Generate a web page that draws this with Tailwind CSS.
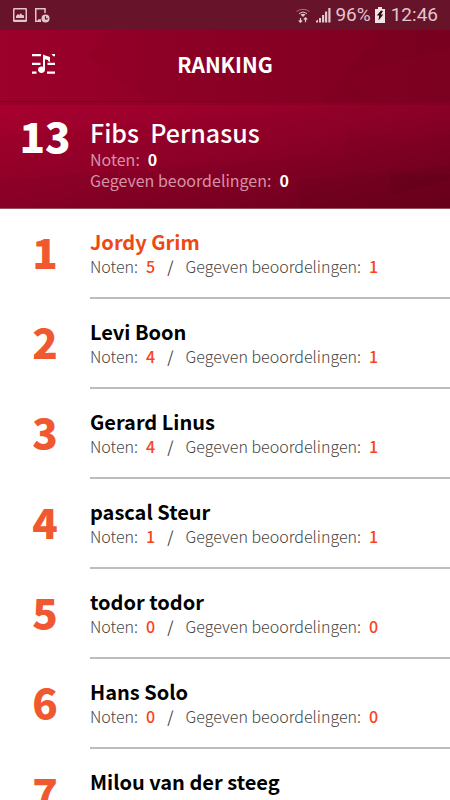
<!DOCTYPE html>
<html lang="nl">
<head>
  <meta charset="UTF-8" />
  <meta name="viewport" content="width=device-width, initial-scale=1.0" />
  <title>Ranking</title>
  <script src="https://cdn.jsdelivr.net/npm/@tailwindcss/browser@4"></script>
</head>
<body class="bg-white h-screen flex flex-col overflow-hidden font-['Noto_Sans_CJK_JP','Open_Sans',sans-serif]">

  <!-- Status bar -->
  <div class="h-[30px] shrink-0 bg-[#671329] flex items-center justify-between px-3 text-[#e2c6ce] font-[Roboto,sans-serif]">
    <div class="flex items-center gap-[6px]">
      <svg class="w-4 h-4" viewBox="0 0 16 16" fill="none" stroke="currentColor" stroke-width="1.5">
        <rect x="1.75" y="1.75" width="12.5" height="12.5" rx="0.5" />
        <path d="M1.750 13.500h12.500" />
        <path d="M4 11V9l2-2 1.500 1L9 6l1 2h1.500L12 9v2z" fill="currentColor" stroke="none" />
      </svg>
      <svg class="w-4 h-4" viewBox="0 0 16 16" fill="none" stroke="currentColor" stroke-width="1.5">
        <path d="M11 6V1.750H1.750v12.500H7M4 13h3" />
        <circle cx="11.500" cy="11.500" r="4" fill="currentColor" stroke="none" />
        <path d="M11.500 9.200v2.600h2.300" stroke="#671329" stroke-width="1.200" />
      </svg>
    </div>
    <div class="flex items-center">
      <svg class="w-4 h-4 mr-1" viewBox="0 0 16 16" fill="none" stroke="currentColor">
        <path d="M1.500 4.500a9 7 0 0 1 13 0" opacity="0.500" />
        <path d="M4 6.500a6 5 0 0 1 8 0" />
        <path d="M5.500 7.500a4 3 0 0 1 5 0L8 10z" fill="currentColor" stroke="none" />
        <path d="M5.500 11v4M3.800 13.500l1.700 1.700 1.700-1.700M10.500 15.200V11M8.800 12.500l1.700-1.700 1.700 1.700" stroke-width="1.200" />
      </svg>
      <svg class="w-4 h-4 mr-1" viewBox="0 0 16 16" fill="currentColor">
        <path d="M1 15.500V14l2-1.500v3zM4 11h2v4.500H4zM7 8h2.200v7.500H7zM10 4.500h2.200v11H10zM13.300 1h2.200v14.500h-2.200z" />
      </svg>
      <span class="text-[19px] leading-[30px]">96%</span>
      <svg class="w-[10px] h-4 ml-1 mr-[6px]" viewBox="0 0 10 16">
        <path d="M3 0h4v2h3v14H0V2h3z" fill="#f3e3e7" />
        <path d="M6 3.500L1.800 8.500h2.400L3.500 13.500 8.300 7.500H5.800L8 4z" fill="#2a0a12" />
      </svg>
      <span class="text-[19px] leading-[30px]">12:46</span>
    </div>
  </div>

  <!-- App bar -->
  <header class="relative isolate h-[72px] shrink-0 bg-linear-to-r from-[#9c002b] to-[#7e0021] border-b border-[#780022] grid grid-cols-[90px_1fr_90px] items-center pb-[3px]">
    <svg class="absolute inset-0 -z-10 w-full h-full" viewBox="0 0 450 72" preserveAspectRatio="none">
      <path d="M108 0L88 27 150 72H450V0z" fill="#5a0018" opacity="0.050" />
      <path d="M382 0L344 46 320 72H450V0z" fill="#5a0018" opacity="0.080" />
      <path d="M344 46L450 20V72H370z" fill="#a00030" opacity="0.080" />
    </svg>
    <button type="button" aria-label="Songs" class="ml-8 text-white">
      <svg class="block w-6 h-6" viewBox="0 0 24 24" fill="currentColor">
        <path d="M0 2h9v2.300H0zM0 10.800h8.500v2.300H0zM0 19.500h4.500v2.300H0zM19.500 2H23v2.300h-1.800zM15.500 10.800H23v2.300h-7.500zM15 19.500h8v2.300h-8z" />
        <path d="M11 2.500l3 1.200 4 1.300v4.700h-1.200L15.800 8 13 7.200v10.600a3.500 3.300 0 1 1-2-3z" />
      </svg>
    </button>
    <h1 class="text-white text-center font-bold text-[21px] leading-6">RANKING</h1>
  </header>

  <!-- Own position -->
  <section class="relative isolate h-[107px] shrink-0 bg-linear-to-br from-[#a8002f] via-[#900029] to-[#6c001d] border-b border-[#9a5058] flex text-white">
    <svg class="absolute inset-0 -z-10 w-full h-full" viewBox="0 0 450 106" preserveAspectRatio="none">
      <path d="M0 34L450 -6V106H0z" fill="#50001a" opacity="0.050" />
      <path d="M0 78L344 53 450 28V106H0z" fill="#50001a" opacity="0.070" />
      <path d="M348 29L344 53 400 39z" fill="#50001a" opacity="0.060" />
      <path d="M300 77L390 71 450 63V106H300z" fill="#50001a" opacity="0.080" />
      <path d="M390 71L392 93 450 78V72z" fill="#40000f" opacity="0.120" />
      <path d="M0 0H450V3H0z" fill="#40000f" opacity="0.150" />
    </svg>
    <div class="w-[90px] shrink-0 pt-[9px] text-center font-black text-[42px] leading-[48px]">13</div>
    <div class="pt-[13px]">
      <h2 class="whitespace-pre font-medium text-[25px] leading-[34px]">Fibs  Pernasus</h2>
      <p class="flex gap-2 text-[16px] leading-[21px] text-[#d592a5]">Noten: <b class="text-white">0</b></p>
      <p class="flex gap-2 text-[16px] leading-[21px] text-[#d592a5]">Gegeven beoordelingen: <b class="text-white">0</b></p>
    </div>
  </section>

  <!-- Ranking list -->
  <ol class="flex-1 overflow-y-auto [scrollbar-width:none]">
    <li class="flex h-[90px]">
      <div class="w-[90px] shrink-0 pt-[18px] text-center font-black text-[42px] leading-[48px] text-[#f0592f]">1</div>
      <div class="flex-1 pt-[19px] border-b-2 border-[#bdbdbd]">
        <h3 class="font-bold text-[20px] leading-[28px] text-[#ec4a14]">Jordy Grim</h3>
        <p class="flex gap-2 font-light text-[16px] leading-[21px] text-[#444]">Noten: <b class="font-medium text-[#f9431c]">5</b> <span class="px-1 font-normal">/</span> Gegeven beoordelingen: <b class="font-medium text-[#f9431c]">1</b></p>
      </div>
    </li>
    <li class="flex h-[90px]">
      <div class="w-[90px] shrink-0 pt-[18px] text-center font-black text-[42px] leading-[48px] text-[#f0592f]">2</div>
      <div class="flex-1 pt-[19px] border-b-2 border-[#bdbdbd]">
        <h3 class="font-bold text-[20px] leading-[28px] text-black">Levi Boon</h3>
        <p class="flex gap-2 font-light text-[16px] leading-[21px] text-[#444]">Noten: <b class="font-medium text-[#f9431c]">4</b> <span class="px-1 font-normal">/</span> Gegeven beoordelingen: <b class="font-medium text-[#f9431c]">1</b></p>
      </div>
    </li>
    <li class="flex h-[90px]">
      <div class="w-[90px] shrink-0 pt-[18px] text-center font-black text-[42px] leading-[48px] text-[#f0592f]">3</div>
      <div class="flex-1 pt-[19px] border-b-2 border-[#bdbdbd]">
        <h3 class="font-bold text-[20px] leading-[28px] text-black">Gerard Linus</h3>
        <p class="flex gap-2 font-light text-[16px] leading-[21px] text-[#444]">Noten: <b class="font-medium text-[#f9431c]">4</b> <span class="px-1 font-normal">/</span> Gegeven beoordelingen: <b class="font-medium text-[#f9431c]">1</b></p>
      </div>
    </li>
    <li class="flex h-[90px]">
      <div class="w-[90px] shrink-0 pt-[18px] text-center font-black text-[42px] leading-[48px] text-[#f0592f]">4</div>
      <div class="flex-1 pt-[19px] border-b-2 border-[#bdbdbd]">
        <h3 class="font-bold text-[20px] leading-[28px] text-black">pascal Steur</h3>
        <p class="flex gap-2 font-light text-[16px] leading-[21px] text-[#444]">Noten: <b class="font-medium text-[#f9431c]">1</b> <span class="px-1 font-normal">/</span> Gegeven beoordelingen: <b class="font-medium text-[#f9431c]">1</b></p>
      </div>
    </li>
    <li class="flex h-[90px]">
      <div class="w-[90px] shrink-0 pt-[18px] text-center font-black text-[42px] leading-[48px] text-[#f0592f]">5</div>
      <div class="flex-1 pt-[19px] border-b-2 border-[#bdbdbd]">
        <h3 class="font-bold text-[20px] leading-[28px] text-black">todor todor</h3>
        <p class="flex gap-2 font-light text-[16px] leading-[21px] text-[#444]">Noten: <b class="font-medium text-[#f9431c]">0</b> <span class="px-1 font-normal">/</span> Gegeven beoordelingen: <b class="font-medium text-[#f9431c]">0</b></p>
      </div>
    </li>
    <li class="flex h-[90px]">
      <div class="w-[90px] shrink-0 pt-[18px] text-center font-black text-[42px] leading-[48px] text-[#f0592f]">6</div>
      <div class="flex-1 pt-[19px] border-b-2 border-[#bdbdbd]">
        <h3 class="font-bold text-[20px] leading-[28px] text-black">Hans Solo</h3>
        <p class="flex gap-2 font-light text-[16px] leading-[21px] text-[#444]">Noten: <b class="font-medium text-[#f9431c]">0</b> <span class="px-1 font-normal">/</span> Gegeven beoordelingen: <b class="font-medium text-[#f9431c]">0</b></p>
      </div>
    </li>
    <li class="flex h-[90px]">
      <div class="w-[90px] shrink-0 pt-[18px] text-center font-black text-[42px] leading-[48px] text-[#f0592f]">7</div>
      <div class="flex-1 pt-[19px]">
        <h3 class="font-bold text-[20px] leading-[28px] text-black">Milou van der steeg</h3>
      </div>
    </li>
  </ol>
</body>
</html>
